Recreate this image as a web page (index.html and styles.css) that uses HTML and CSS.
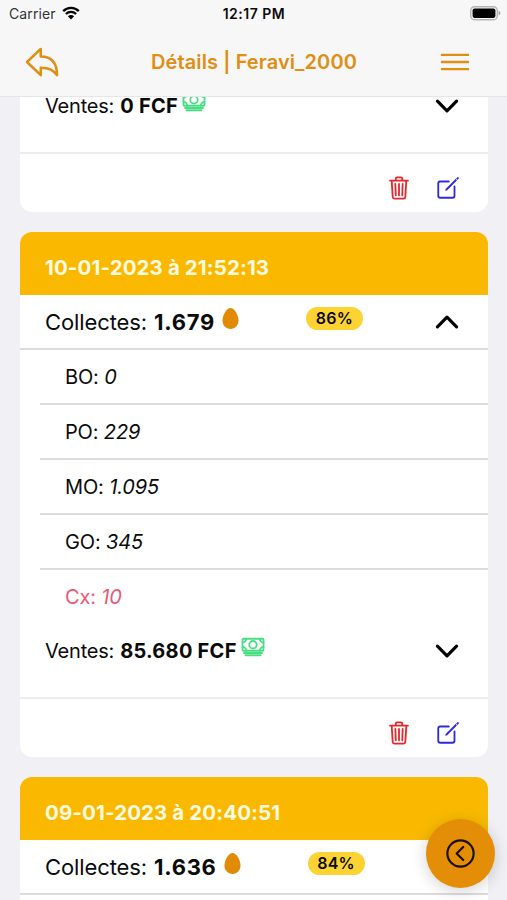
FILE: index.html
```html
<!DOCTYPE html>
<html lang="fr">
<head>
<meta charset="utf-8">
<title>Détails | Feravi_2000</title>
<link rel="stylesheet" href="styles.css">
</head>
<body>
<svg class="defs" width="0" height="0" aria-hidden="true">
  <symbol id="trash" viewBox="0 0 512 512"><path d="M112 112l20 320c.95 18.49 14.4 32 32 32h184c17.67 0 30.87-13.51 32-32l20-320M80 112h352M192 112V72a24 24 0 0124-24h80a24 24 0 0124 24v40M256 176v224M184 176l8 224M328 176l-8 224"/></symbol>
  <symbol id="edit" viewBox="0 0 512 512"><path d="M384 224v184a40 40 0 01-40 40H104a40 40 0 01-40-40V168a40 40 0 0140-40h167.48"/><path class="solid" d="M459.94 53.25a16.06 16.06 0 00-23.22-.56L424.35 65a8 8 0 000 11.31l11.34 11.32a8 8 0 0011.34 0l12.06-12c6.1-6.09 6.67-16.01.85-22.38zM399.34 90L218.82 270.2a9 9 0 00-2.31 3.93L208.16 299a3.91 3.91 0 004.86 4.86l24.85-8.35a9 9 0 003.93-2.31L422 112.66a9 9 0 000-12.66l-9.95-10a9 9 0 00-12.71 0z"/></symbol>
  <symbol id="cash" viewBox="0 0 512 512"><rect x="32" y="80" width="448" height="256" rx="16"/><path d="M64 384h384M96 432h320M480 160a80 80 0 01-80-80M32 160a80 80 0 0080-80M480 256a80 80 0 00-80 80M32 256a80 80 0 0180 80"/><circle cx="256" cy="208" r="80"/></symbol>
  <symbol id="down" viewBox="0 0 512 512"><path d="M112 184l144 144 144-144"/></symbol>
  <symbol id="up" viewBox="0 0 512 512"><path d="M112 328l144-144 144 144"/></symbol>
  <symbol id="egg" viewBox="0 0 16 21"><path d="M8 0C12 0 16 7.200 16 12.600C16 17.600 12.600 21 8 21S0 17.600 0 12.600C0 7.200 4 0 8 0z"/></symbol>
</svg>

<header class="top">
  <div class="status">
    <div class="carrier">Carrier
      <svg class="wifi" viewBox="0 0 18 14"><path d="M1.200 5.100a11 11 0 0115.600 0M3.900 8a7.200 7.200 0 0110.200 0"/><path class="dot" d="M5.900 10.300a4.400 4.400 0 016.200 0L9 13.500z"/></svg>
    </div>
    <div class="clock">12:17 PM</div>
    <svg class="battery" viewBox="0 0 31 15"><rect class="shell" x=".7" y=".7" width="26.600" height="13" rx="3.800"/><rect class="charge" x="2.600" y="2.500" width="22.800" height="9.400" rx="1.800"/><path class="cap" d="M28.600 4.800c2.400 1 2.400 3.800 0 4.800z"/></svg>
  </div>
  <nav class="toolbar">
    <svg class="icon back" viewBox="0 0 512 512"><path d="M240 424v-96c116.400 0 159.390 33.760 208 96 0-119.230-39.570-240-208-240V88L64 256z"/></svg>
    <h1>Détails | Feravi_2000</h1>
    <svg class="icon menu" viewBox="0 0 512 512"><path d="M80 160h352M80 256h352M80 352h352"/></svg>
  </nav>
</header>

<main class="feed">
  <section class="card card-cut">
    <div class="sales">
      <span>Ventes:</span><b>0 FCF</b><svg class="icon cash"><use href="#cash"/></svg>
      <svg class="icon chevron"><use href="#down"/></svg>
    </div>
    <footer><svg class="icon trash"><use href="#trash"/></svg><svg class="icon edit"><use href="#edit"/></svg></footer>
  </section>

  <section class="card">
    <h2>10-01-2023 à 21:52:13</h2>
    <div class="collect">
      <span class="name">Collectes:</span><b>1.679</b><svg class="egg"><use href="#egg"/></svg>
      <span class="badge">86%</span>
      <svg class="icon chevron"><use href="#up"/></svg>
    </div>
    <ul>
      <li>BO: <i>0</i></li>
      <li>PO: <i>229</i></li>
      <li>MO: <i>1.095</i></li>
      <li>GO: <i>345</i></li>
      <li class="loss">Cx: <i>10</i></li>
    </ul>
    <div class="sales">
      <span>Ventes:</span><b>85.680 FCF</b><svg class="icon cash"><use href="#cash"/></svg>
      <svg class="icon chevron"><use href="#down"/></svg>
    </div>
    <footer><svg class="icon trash"><use href="#trash"/></svg><svg class="icon edit"><use href="#edit"/></svg></footer>
  </section>

  <section class="card card-open">
    <h2>09-01-2023 à 20:40:51</h2>
    <div class="collect">
      <span class="name">Collectes:</span><b>1.636</b><svg class="egg"><use href="#egg"/></svg>
      <span class="badge">84%</span>
    </div>
  </section>
</main>

<button class="fab" aria-label="Retour"><svg class="icon" viewBox="0 0 512 512"><circle cx="256" cy="256" r="192"/><path d="M296 352l-96-96 96-96"/></svg></button>
</body>
</html>
```
FILE: styles.css
```css
* { box-sizing: border-box; }
body {
  margin: 0;
  height: 900px;
  overflow: hidden;
  background: #f0f0f5;
  color: #0b0b0b;
  font-family: Inter, "Liberation Sans", sans-serif;
}
.defs { position: absolute; }
svg { display: block; flex: none; }
.icon {
  fill: none;
  stroke: currentColor;
  stroke-width: 32;
  stroke-linecap: round;
  stroke-linejoin: round;
}
.solid { fill: currentColor; stroke: currentColor; stroke-width: 10; }

.top {
  position: relative;
  z-index: 2;
  height: 97px;
  background: #f7f7f7;
  border-bottom: 1px solid #e6e6e8;
}
.status {
  display: grid;
  grid-template-columns: 1fr auto 1fr;
  align-items: center;
  height: 27px;
  padding: 0 6px 0 9px;
  font-size: 14px;
}
.carrier { display: flex; align-items: center; gap: 6px; color: #333; letter-spacing: .1px; }
.wifi { width: 18px; height: 14px; margin-top: -2px; fill: none; stroke: #050505; stroke-width: 2.300; }
.wifi .dot { fill: #050505; stroke: none; }
.clock { margin-right: 2px; font-weight: 600; letter-spacing: .5px; }
.battery { width: 31px; height: 15px; justify-self: end; }
.shell { fill: #f7f7f7; stroke: #b5b5b5; stroke-width: 1.400; }
.charge { fill: #000; }
.cap { fill: #a5a5a5; }
.toolbar {
  display: flex;
  align-items: center;
  justify-content: space-between;
  height: 69px;
  padding: 0 33px 0 22px;
  color: #e08e14;
}
.back { width: 40px; height: 40px; }
.menu { width: 38px; height: 38px; }
h1 { margin: 0 0 0 10px; font-size: 20px; font-weight: 600; letter-spacing: .1px; white-space: nowrap; }

.feed { height: 821px; margin-top: -18px; padding: 0 19.500px 0 20px; overflow: hidden; }
.card {
  margin-bottom: 19.500px;
  overflow: hidden;
  border-radius: 12px;
  background: #fff;
}
.card-cut { border-radius: 0 0 12px 12px; }
.card-open { height: 160px; }
h2 {
  display: flex;
  align-items: center;
  height: 63px;
  margin: 0;
  padding: 8px 25px 0;
  background: #fab900;
  color: #fffae0;
  font-size: 20.500px;
  font-weight: 700;
  letter-spacing: .1px;
}
.collect {
  display: flex;
  align-items: center;
  height: 55px;
  padding: 1px 24px 0 25px;
  border-bottom: 2px solid #dcdcdf;
  font-size: 22px;
}
.collect .name { letter-spacing: -.1px; }
.collect b { margin-left: 7px; font-weight: 700; letter-spacing: .7px; }
.egg { width: 17px; height: 21px; margin: -7px 0 0 7px; fill: #e18b04; }
.badge {
  width: 57px;
  height: 23px;
  margin: -7px 0 0 67px;
  border-radius: 12px;
  background: #fdd334;
  font-size: 16px;
  font-weight: 600;
  line-height: 23px;
  letter-spacing: .2px;
  text-align: center;
}
.chevron { width: 34px; height: 34px; margin-left: auto; stroke-width: 48; color: #000; }
ul { margin: 0; padding: 0 0 0 20px; list-style: none; }
li {
  height: 55px;
  padding-left: 25px;
  border-bottom: 2px solid #dcdcdc;
  font-size: 20px;
  line-height: 55px;
  letter-spacing: -.15px;
}
li:last-child { height: 54.500px; border-bottom: 0; }
.loss { color: #ed5775; }
.sales {
  display: flex;
  align-items: flex-start;
  height: 74.500px;
  padding: 15px 24px 0 25px;
  border-bottom: 2px solid #ededee;
  font-size: 20px;
  line-height: 24px;
}
.sales span { letter-spacing: -.2px; }
.sales b { margin-left: 6px; font-weight: 700; letter-spacing: .25px; }
.cash { width: 24px; height: 24px; margin: -4px 0 0 4px; stroke-width: 38; color: #48df83; }
.sales .chevron { margin-top: -5px; }
footer {
  display: flex;
  justify-content: flex-end;
  gap: 23.500px;
  height: 58.500px;
  padding: 21px 26.500px 0 0;
}
footer .icon { width: 26px; height: 26px; stroke-width: 36; }
.trash { color: #e92629; }
.edit { color: #2f2add; }

.fab {
  position: absolute;
  z-index: 3;
  left: 426px;
  top: 819px;
  display: grid;
  place-items: center;
  width: 69px;
  height: 69px;
  padding: 0;
  border: 0;
  border-radius: 50%;
  background: #e38e06;
  color: #1b1001;
  box-shadow: 0 3px 16px rgb(0 0 0 / 18%);
}
.fab svg { width: 35px; height: 35px; }
```
